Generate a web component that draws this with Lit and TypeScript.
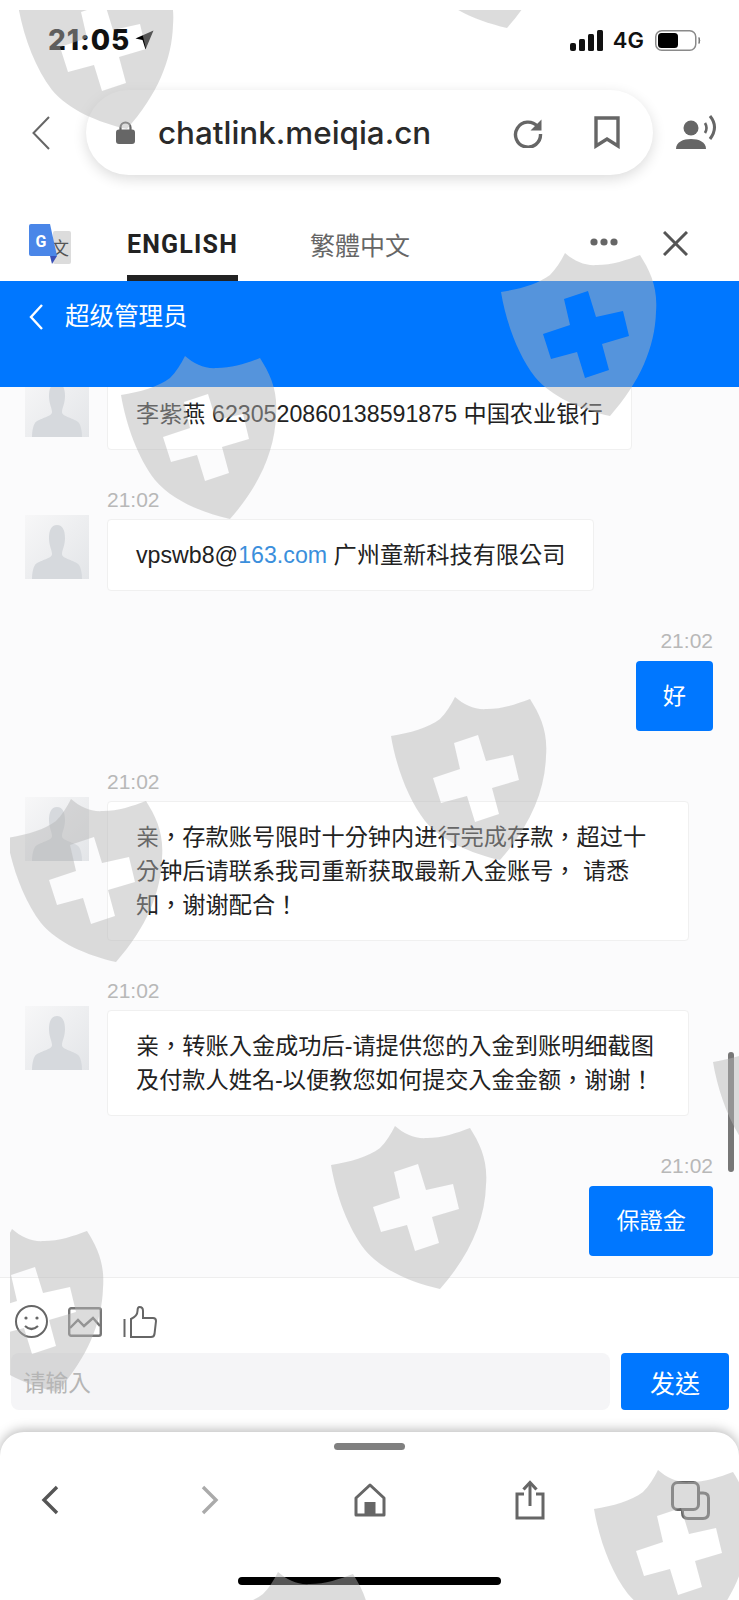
import { LitElement, html, css, svg } from 'lit';
import { customElement } from 'lit/decorators.js';

type Msg = { time?: string; html: unknown; me?: boolean };

// top-left corner of each watermark shield on the page
const SHIELDS: [number, number][] = [
  [7, -50], [387, -151], [490, 237], [110, 340], [380, 681],
  [-4, 783], [702, 1007], [320, 1110], [-63, 1213], [583, 1454], [203, 1556],
];

const SHIELD_PATH =
  'M75 16C84 24 95 29 107 28C122 28 137 23 150 18C160 34 168 50 166 75C165 110 150 145 120 179C90 172 62 160 45 140C28 118 16 85 11 55C30 52 48 47 60 38C66 32 71 24 75 16Z' +
  'M74 62L98 54L106 80L133 74L139 99L112 107L119 133L95 141L87 115L61 122L53 97L80 88Z';

const MESSAGES: Msg[] = [
  { html: html`李紫燕 6230520860138591875 中国农业银行` },
  { time: '21:02', html: html`vpswb8@<span class="link">163.com</span> 广州童新科技有限公司` },
  { time: '21:02', html: html`好`, me: true },
  { time: '21:02', html: html`亲，存款账号限时十分钟内进行完成存款，超过十分钟后请联系我司重新获取最新入金账号， 请悉知，谢谢配合！` },
  { time: '21:02', html: html`亲，转账入金成功后-请提供您的入金到账明细截图及付款人姓名-以便教您如何提交入金金额，谢谢！` },
  { time: '21:02', html: html`保證金`, me: true },
];

@customElement('app-root')
export class AppRoot extends LitElement {
  static styles = css`
    :host {
      display: block;
      position: relative;
      width: 739px;
      height: 1600px;
      overflow: hidden;
      background: #fff;
      font-family: "Liberation Sans", "Noto Sans CJK TC", sans-serif;
      color: #222;
    }
    svg { display: block; flex: none; }

    .status {
      height: 80px;
      display: flex;
      align-items: center;
      padding: 0 38px 0 48px;
    }
    .clock {
      font: 800 28px Inter, sans-serif;
      color: #111;
      letter-spacing: 0.9px;
    }
    .loc { margin-left: 5px; }
    .status-right {
      margin-left: auto;
      display: flex;
      align-items: center;
    }
    .net {
      font: 600 22px Inter, sans-serif;
      color: #111;
      margin: 0 11px 0 10px;
    }

    .urlrow {
      margin-top: 10px;
      height: 85px;
      display: flex;
      align-items: center;
      padding-left: 32px;
    }
    .pill {
      margin-left: 36px;
      width: 567px;
      height: 85px;
      box-sizing: border-box;
      border-radius: 43px;
      background: #fff;
      box-shadow: 0 4px 14px rgba(0, 0, 0, 0.14);
      display: flex;
      align-items: center;
      padding: 0 33px 0 30px;
    }
    .host-name {
      margin-left: 23px;
      font: 500 31.4px Inter, sans-serif;
      color: #2a2a2a;
      flex: 1;
    }
    .bookmark { margin-left: 51px; }
    .voice { margin-left: 22px; }

    .translate {
      margin-top: 25px;
      height: 81px;
      display: flex;
      align-items: center;
      padding: 0 51px 0 29px;
    }
    .gicon { margin-top: 6px; }
    .tab {
      height: 81px;
      box-sizing: border-box;
      padding-top: 13px;
      display: flex;
      align-items: center;
      border-bottom: 6px solid transparent;
      font-size: 25px;
      color: #666;
    }
    .tab.on {
      margin-left: 56px;
      border-bottom-color: #222;
      font: 700 25px Roboto, sans-serif;
      color: #222;
      letter-spacing: 1.2px;
    }
    .tab.off { margin-left: 72px; font-weight: 400; }
    .dots { margin-left: auto; margin-top: 2px; }
    .close { margin-left: 45px; margin-top: 5px; }

    .bar {
      height: 106px;
      box-sizing: border-box;
      background: #0077ff;
      display: flex;
      align-items: flex-start;
      padding: 23px 0 0 29px;
      color: #fff;
      font-size: 24.5px;
      line-height: 26px;
    }
    .bar span { margin-left: 22px; }

    .chat {
      position: relative;
      height: 890px;
      overflow: hidden;
      background: #fbfbfc;
      padding: 0 26px 0 25px;
      display: flex;
      flex-direction: column;
      gap: 39px;
    }
    .msg {
      display: flex;
      gap: 18px;
      align-items: flex-start;
    }
    .msg.first { margin-top: -9px; }
    .msg.me { justify-content: flex-end; margin-bottom: 1px; }
    .avatar { margin-top: 26px; }
    .first .avatar { margin-top: -5px; }
    .col {
      display: flex;
      flex-direction: column;
      align-items: flex-start;
      gap: 8px;
    }
    .me .col { align-items: flex-end; gap: 9px; }
    .time {
      font-size: 21px;
      line-height: 22px;
      color: #b8b8b8;
    }
    .bubble {
      max-width: 582px;
      box-sizing: border-box;
      padding: 18px 28px;
      background: #fff;
      border: 1px solid #f0f0f0;
      border-radius: 4px;
      font-size: 23.2px;
      line-height: 34px;
      color: #222;
    }
    .me .bubble {
      padding: 18px 27px;
      border: 0;
      background: #0077ff;
      color: #fff;
    }
    .link { color: #3b8fdc; }
    .scroll {
      position: absolute;
      right: 5px;
      top: 665px;
      width: 6px;
      height: 120px;
      border-radius: 3px;
      background: #777;
    }

    .composer {
      height: 155px;
      box-sizing: border-box;
      border-top: 1px solid #eee;
      background: #fff;
      padding-top: 27px;
    }
    .tools {
      display: flex;
      align-items: center;
      height: 33px;
      padding-left: 15px;
    }
    .tools .img { margin-left: 20px; }
    .tools .thumb { margin-left: 21px; }
    .send-row {
      margin-top: 15px;
      display: flex;
      gap: 11px;
      padding: 0 10px 0 11px;
    }
    .input {
      flex: 1;
      height: 57px;
      border-radius: 8px;
      background: #f5f5f7;
      padding-left: 12px;
      display: flex;
      align-items: center;
      font-size: 22.6px;
      color: #b5b5b5;
    }
    .send {
      width: 108px;
      height: 57px;
      border-radius: 4px;
      background: #0077ff;
      color: #fff;
      font-size: 25px;
      display: flex;
      align-items: center;
      justify-content: center;
    }

    .sheet {
      height: 168px;
      background: #fff;
      border-radius: 24px 24px 0 0;
      box-shadow: 0 -2px 12px rgba(0, 0, 0, 0.28);
      position: relative;
      display: flex;
      flex-direction: column;
      align-items: center;
    }
    .handle {
      margin-top: 11px;
      width: 71px;
      height: 7px;
      border-radius: 4px;
      background: #808080;
    }
    .nav {
      margin-top: 29px;
      width: 100%;
      height: 42px;
      box-sizing: border-box;
      padding: 0 29px 0 30px;
      display: flex;
      justify-content: space-between;
      align-items: center;
    }
    .nav-item {
      width: 40px;
      display: flex;
      justify-content: center;
    }
    .home-bar {
      margin-top: 56px;
      width: 263px;
      height: 8px;
      border-radius: 4px;
      background: #000;
    }

    .watermark {
      position: absolute;
      left: 0;
      top: 0;
      pointer-events: none;
    }
  `;

  renderStatus() {
    return html`
      <div class="status">
        <span class="clock">21:05</span>
        <svg class="loc" width="19" height="20" viewBox="0 0 19 20"><path d="M18.5 0.5L0.5 8.5L7.5 10L10.5 19.5Z" fill="#000"/></svg>
        <div class="status-right">
          <svg width="33" height="21" viewBox="0 0 33 21" fill="#111">
            <rect x="0" y="13" width="6" height="8" rx="2"/>
            <rect x="9" y="9" width="6" height="12" rx="1.5"/>
            <rect x="18" y="4" width="6" height="17" rx="1.5"/>
            <rect x="27" y="0" width="6" height="21" rx="1.5"/>
          </svg>
          <span class="net">4G</span>
          <svg width="46" height="21" viewBox="0 0 46 21">
            <rect x="0.75" y="0.75" width="40" height="19.5" rx="6" fill="none" stroke="#8a8a8a" stroke-width="1.5"/>
            <rect x="3" y="3" width="20" height="15" rx="3.5" fill="#000"/>
            <path d="M44 7.5Q45.5 10.5 44 13.5Z" fill="#777" stroke="#777"/>
          </svg>
        </div>
      </div>`;
  }

  renderUrlRow() {
    return html`
      <div class="urlrow">
        <svg width="18" height="34" viewBox="0 0 18 34"><path d="M17 1L1.5 17L17 33" fill="none" stroke="#666" stroke-width="2"/></svg>
        <div class="pill">
          <svg width="19" height="23" viewBox="0 0 19 23" fill="#666">
            <path d="M4.5 10V6.5a5 5 0 0 1 10 0V10" fill="none" stroke="#666" stroke-width="2.2"/>
            <rect x="0" y="8.5" width="19" height="14.5" rx="3"/>
          </svg>
          <span class="host-name">chatlink.meiqia.cn</span>
          <svg width="30" height="30" viewBox="0 0 30 30" fill="none">
            <path d="M24.5 8.5A12.5 12.5 0 1 0 27.5 16" stroke="#666" stroke-width="3.4"/>
            <path d="M28.5 1.5V12.5H17.5Z" fill="#666"/>
          </svg>
          <svg class="bookmark" width="26" height="33" viewBox="0 0 26 33"><path d="M2 2H24V30L13 23L2 30Z" fill="none" stroke="#666" stroke-width="3.4"/></svg>
        </div>
        <svg class="voice" width="44" height="36" viewBox="0 0 44 36">
          <circle cx="16" cy="13" r="7.5" fill="#666"/>
          <path d="M1 34C1 27 8 24 16 24C24 24 31 27 31 34Z" fill="#666"/>
          <path d="M30 8Q33 13 30 18" fill="none" stroke="#666" stroke-width="2.6"/>
          <path d="M35 1Q44 12 35 24" fill="none" stroke="#666" stroke-width="3"/>
        </svg>
      </div>`;
  }

  renderTranslate() {
    return html`
      <div class="translate">
        <svg class="gicon" width="42" height="42" viewBox="0 0 42 42">
          <rect x="24" y="8" width="18" height="33" rx="2" fill="#dcdcdc"/>
          <text x="31" y="32" font-size="18" fill="#555" text-anchor="middle" font-family="Noto Sans CJK SC">文</text>
          <path d="M21 33H28L23 41Z" fill="#3a50b8"/>
          <path d="M2 1H21L28 33H2Q0 33 0 31V3Q0 1 2 1Z" fill="#4a86e8"/>
          <text x="12" y="24" font-size="16" font-weight="700" fill="#fff" text-anchor="middle" font-family="Roboto">G</text>
        </svg>
        <div class="tab on">ENGLISH</div>
        <div class="tab off">繁體中文</div>
        <svg class="dots" width="28" height="8" viewBox="0 0 28 8" fill="#666">
          <circle cx="4" cy="4" r="3.6"/><circle cx="14" cy="4" r="3.6"/><circle cx="24" cy="4" r="3.6"/>
        </svg>
        <svg class="close" width="25" height="25" viewBox="0 0 25 25"><path d="M1 1L24 24M24 1L1 24" stroke="#555" stroke-width="3"/></svg>
      </div>`;
  }

  renderAvatar() {
    return html`
      <svg class="avatar" width="64" height="64" viewBox="0 0 64 64">
        <defs>
          <linearGradient id="avbg" x1="0" y1="0" x2="1" y2="1">
            <stop offset="0" stop-color="#f7f7f8"/><stop offset="1" stop-color="#e3e5e8"/>
          </linearGradient>
        </defs>
        <rect width="64" height="64" fill="url(#avbg)"/>
        <path d="M32 10C38 10 40 16 40 23C40 31 37 35 37 39C37 44 50 45 54 50C56 53 57 58 57 64H7C7 58 8 53 10 50C14 45 27 44 27 39C27 35 24 31 24 23C24 16 26 10 32 10Z" fill="#d6d9dd"/>
      </svg>`;
  }

  renderChat() {
    return html`
      <div class="chat">
        ${MESSAGES.map((m, i) => html`
          <div class="msg ${m.me ? 'me' : ''} ${i === 0 ? 'first' : ''}">
            ${m.me ? '' : this.renderAvatar()}
            <div class="col">
              ${m.time ? html`<span class="time">${m.time}</span>` : ''}
              <div class="bubble">${m.html}</div>
            </div>
          </div>`)}
        <div class="scroll"></div>
      </div>`;
  }

  renderComposer() {
    return html`
      <div class="composer">
        <div class="tools">
          <svg width="33" height="33" viewBox="0 0 33 33" fill="none" stroke="#666" stroke-width="2">
            <circle cx="16.5" cy="16.5" r="15.5"/>
            <circle cx="11" cy="13" r="1.6" fill="#666" stroke="none"/>
            <circle cx="22" cy="13" r="1.6" fill="#666" stroke="none"/>
            <path d="M10 21Q16.5 27 23 21" stroke-width="2.2"/>
          </svg>
          <svg class="img" width="34" height="30" viewBox="0 0 34 30" fill="none" stroke="#777" stroke-width="2.4">
            <rect x="1.2" y="1.2" width="31.6" height="27.6" rx="2"/>
            <path d="M2 21L10 13L16 19L25 11L32 19"/>
          </svg>
          <svg class="thumb" width="34" height="32" viewBox="0 0 34 32" fill="none" stroke="#666" stroke-width="2">
            <path d="M1.5 13V31"/>
            <path d="M8 13V31H28Q31 31 31.5 28L33 15Q33 12 30 12H20V5Q20 1 16.5 1Q14.5 1 14.5 5Q14.5 10 8 13Z"/>
          </svg>
        </div>
        <div class="send-row">
          <div class="input">请输入</div>
          <div class="send">发送</div>
        </div>
      </div>`;
  }

  renderSheet() {
    return html`
      <div class="sheet">
        <div class="handle"></div>
        <div class="nav">
          <div class="nav-item"><svg width="18" height="30" viewBox="0 0 18 30"><path d="M16 2L3 15L16 28" fill="none" stroke="#555" stroke-width="3.4"/></svg></div>
          <div class="nav-item"><svg width="18" height="30" viewBox="0 0 18 30"><path d="M2 2L15 15L2 28" fill="none" stroke="#aaa" stroke-width="3.4"/></svg></div>
          <div class="nav-item">
            <svg width="32" height="34" viewBox="0 0 32 34">
              <path d="M16 2L30 15V32H2V15Z" fill="none" stroke="#666" stroke-width="3" stroke-linejoin="round"/>
              <rect x="10.5" y="19" width="11" height="13" fill="#666"/>
            </svg>
          </div>
          <div class="nav-item">
            <svg width="30" height="40" viewBox="0 0 30 40" fill="none" stroke="#666" stroke-width="3">
              <path d="M9 14H2V38H28V14H21"/>
              <path d="M15 3V26"/>
              <path d="M8.5 9.5L15 2.5L21.5 9.5" stroke-width="3.2"/>
            </svg>
          </div>
          <div class="nav-item">
            <svg width="39" height="39" viewBox="0 0 39 39" fill="none" stroke="#666" stroke-width="3">
              <rect x="1.5" y="1.5" width="26" height="27" rx="5"/>
              <path d="M28 12H32Q37.5 12 37.5 17V32Q37.5 37.5 32 37.5H17Q11.5 37.5 11.5 32V29"/>
            </svg>
          </div>
        </div>
        <div class="home-bar"></div>
      </div>`;
  }

  renderWatermark() {
    return html`
      <svg class="watermark" width="739" height="1600" viewBox="0 0 739 1600">
        <defs><clipPath id="wm"><rect x="10" y="10" width="729" height="1590"/></clipPath></defs>
        <g clip-path="url(#wm)">
          ${SHIELDS.map(([x, y]) => svg`
            <path transform="translate(${x} ${y})" d=${SHIELD_PATH} fill="rgb(181,181,181)" fill-opacity="0.47" fill-rule="evenodd"/>`)}
        </g>
      </svg>`;
  }

  render() {
    return html`
      ${this.renderStatus()}
      ${this.renderUrlRow()}
      ${this.renderTranslate()}
      <div class="bar">
        <svg width="14" height="26" viewBox="0 0 14 26"><path d="M13 1L2 13L13 25" fill="none" stroke="#fff" stroke-width="2.4"/></svg>
        <span>超级管理员</span>
      </div>
      ${this.renderChat()}
      ${this.renderComposer()}
      ${this.renderSheet()}
      ${this.renderWatermark()}
    `;
  }
}
